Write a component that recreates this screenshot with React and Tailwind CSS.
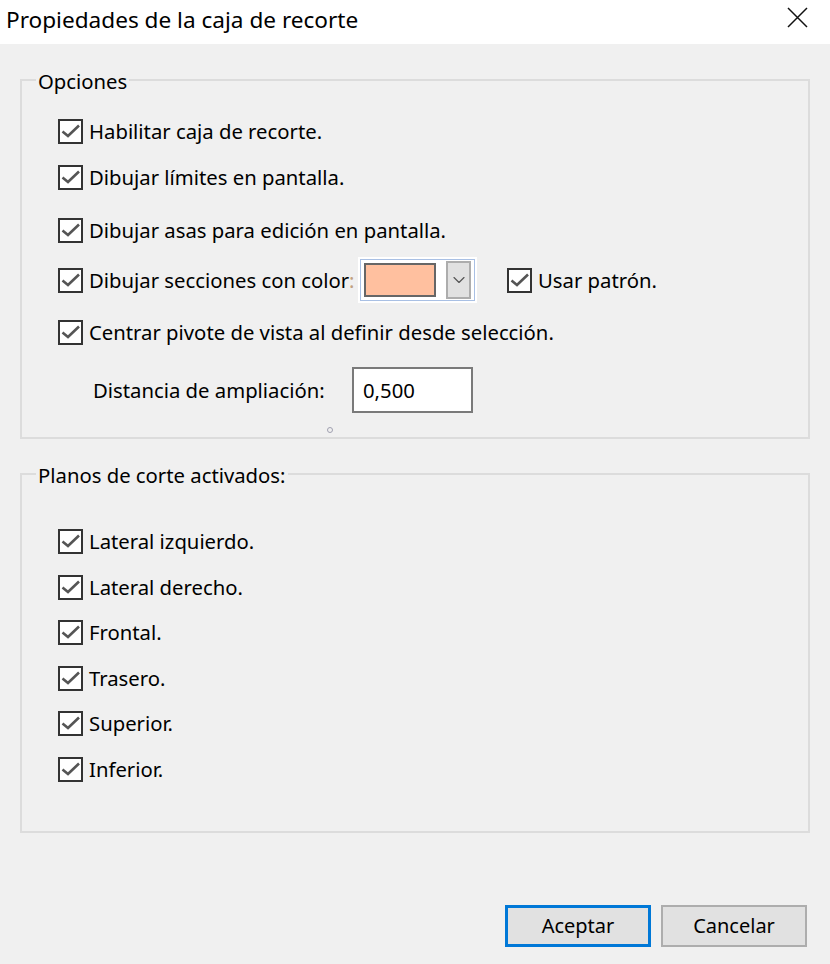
import { ChevronDown } from "lucide-react";

function Check({ className = "" }) {
  return (
    <span
      className={`w-[25px] h-[25px] shrink-0 border-2 border-[#333333] bg-white flex items-center justify-center ${className}`}
    >
      <svg width="21" height="21" viewBox="0 0 21 21">
        <polyline
          points="2.5,10.5 8,15 19,4.5"
          fill="none"
          stroke="#555555"
          strokeWidth="2.6"
        />
      </svg>
    </span>
  );
}

function Row({ label, className = "" }) {
  return (
    <div className={`h-[25px] flex items-center pl-[36px] ${className}`}>
      <Check />
      <span className="ml-[6px] leading-[25px]">{label}</span>
    </div>
  );
}

function GroupTitle({ children }) {
  return (
    <div className="-mt-[12px] ml-[14px] px-[2px] w-fit bg-[#f0f0f0] leading-[24px]">
      {children}
    </div>
  );
}

export default function App() {
  const planos = [
    "Lateral izquierdo.",
    "Lateral derecho.",
    "Frontal.",
    "Trasero.",
    "Superior.",
    "Inferior.",
  ];

  return (
    <div className="w-[830px] h-[964px] bg-[#f0f0f0] flex flex-col text-[20.3px] text-black font-['Noto_Sans',sans-serif]">
      {/* Title bar */}
      <div className="h-[44px] bg-white flex items-start justify-between pl-[6px] pr-[22px]">
        <span className="mt-[5px] text-[22.6px] leading-[30px]">Propiedades de la caja de recorte</span>
        <svg className="mt-[7px]" width="21" height="21" viewBox="0 0 21 21">
          <path d="M1 1 L20 20 M20 1 L1 20" stroke="#111111" strokeWidth="1.5" fill="none" />
        </svg>
      </div>

      <div className="flex-1 flex flex-col px-[20px] pt-[35px]">
        {/* Opciones */}
        <div className="h-[360px] border-2 border-[#dcdcdc] flex flex-col">
          <GroupTitle>Opciones</GroupTitle>
          <Row label="Habilitar caja de recorte." className="mt-[26px]" />
          <Row label="Dibujar límites en pantalla." className="mt-[21px]" />
          <Row label="Dibujar asas para edición en pantalla." className="mt-[28px]" />

          <div className="h-[46px] mt-[14px] flex items-center pl-[36px]">
            <Check />
            <span className="ml-[6px] w-[269px] leading-[25px] whitespace-nowrap">
              Dibujar secciones con color<span className="text-[#c0a080]">:</span>
            </span>
            <div className="w-[119px] h-[46px] bg-white p-[2px]">
              <div className="w-full h-full border border-[#a9c0e4] flex items-center px-[3px] gap-[10px]">
                <div className="w-[73px] h-[34px] border-2 border-[#666666] bg-[#ffc09f]" />
                <div className="w-[25px] h-[38px] border-2 border-[#adadad] bg-[#e1e1e1] flex items-center justify-center">
                  <ChevronDown size={20} strokeWidth={1.4} className="text-[#555555]" />
                </div>
              </div>
            </div>
            <Check className="ml-[30px]" />
            <span className="ml-[6px] leading-[25px]">Usar patrón.</span>
          </div>

          <Row label="Centrar pivote de vista al definir desde selección." className="mt-[17px]" />

          <div className="h-[46px] mt-[22px] flex items-center pl-[71px]">
            <span className="w-[259px]">Distancia de ampliación:</span>
            <div className="w-[121px] h-[46px] border-2 border-[#7a7a7a] bg-white flex items-center pl-[9px]">
              0,500
            </div>
          </div>

          <div className="mt-[14px] ml-[305px] w-[6px] h-[6px] rounded-full border border-[#a0a0b0]" />
        </div>

        {/* Planos de corte */}
        <div className="h-[360px] mt-[34px] border-2 border-[#dcdcdc] flex flex-col">
          <GroupTitle>Planos de corte activados:</GroupTitle>
          <div className="mt-[42px] flex flex-col gap-[20.5px]">
            {planos.map((p) => (
              <Row key={p} label={p} />
            ))}
          </div>
        </div>

        {/* Buttons */}
        <div className="mt-[72px] flex justify-end gap-[10px] pr-[3px]">
          <button className="w-[146px] h-[42px] border-[3px] border-[#0078d7] bg-[#e1e1e1] text-[20px]">
            Aceptar
          </button>
          <button className="w-[146px] h-[42px] border-2 border-[#adadad] bg-[#e1e1e1] text-[20px]">
            Cancelar
          </button>
        </div>
      </div>
    </div>
  );
}
